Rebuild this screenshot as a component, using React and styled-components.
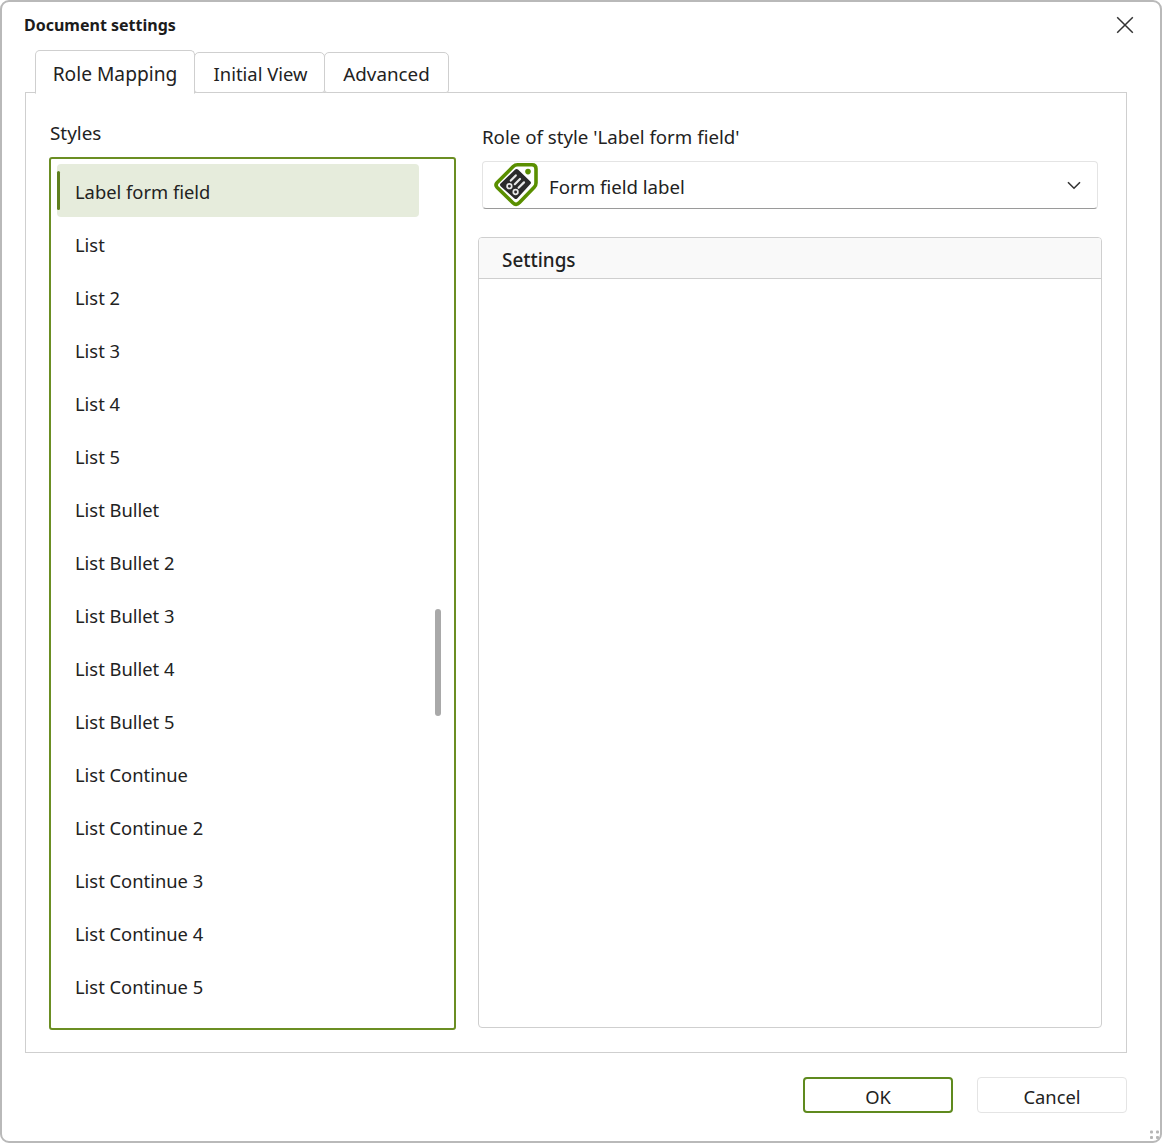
import React from 'react';
import styled, { createGlobalStyle } from 'styled-components';

const Global = createGlobalStyle`
  html, body { margin: 0; padding: 0; background: #fff; }
  body { font-family: "Noto Sans", "Open Sans", "Liberation Sans", sans-serif; color: #1f1f1f; }
  * { box-sizing: border-box; }
`;

const Window = styled.div`
  width: 1162px;
  height: 1143px;
  position: relative;
  background: #fff;
  border: 2px solid #b9b9b9;
  border-radius: 9px;
  padding: 0 33px 28px 23px;
  display: flex;
  flex-direction: column;
`;

const TitleBar = styled.div`
  height: 48px;
  display: flex;
  justify-content: space-between;
  align-items: flex-start;
`;

const Title = styled.h1`
  margin: 13px 0 0 -1px;
  font-size: 16px;
  line-height: 20px;
  font-weight: 700;
  font-family: "Noto Sans", sans-serif;
  color: #1c1c1c;
`;

const CloseButton = styled.button`
  border: 0;
  background: none;
  padding: 0;
  margin: 14px -7px 0 0;
  width: 18px;
  height: 18px;
  color: #333;
  display: block;
  svg { display: block; }
`;

const Tabs = styled.div`
  display: flex;
  align-items: flex-end;
  padding-left: 10px;
  height: 43px;
  position: relative;
  z-index: 1;
`;

const Tab = styled.div`
  height: ${p => (p.$active ? 44 : 41)}px;
  width: ${p => p.$w}px;
  border: 1px solid #cfcfcf;
  border-bottom: ${p => (p.$active ? '1px solid #fff' : '1px solid #cfcfcf')};
  border-radius: 5px 5px ${p => (p.$active ? '0 0' : '3px 3px')};
  background: #fff;
  font-size: ${p => p.$size}px;
  line-height: ${p => (p.$active ? 45 : 42)}px;
  padding-left: ${p => p.$nudge || 0}px;
  text-align: center;
  color: #222;
  margin-bottom: ${p => (p.$active ? -1 : 0)}px;
  margin-left: ${p => p.$overlap || 0}px;
`;

const TabPanel = styled.div`
  flex: 1;
  border: 1px solid #cfcfcf;
  margin-top: -1px;
  padding: 28px 24px 22px 23px;
  display: grid;
  grid-template-columns: 407px 624px;
  column-gap: 22px;
`;

const LeftColumn = styled.div`
  display: flex;
  flex-direction: column;
`;

const RightColumn = styled.div`
  display: flex;
  flex-direction: column;
`;

const FieldLabel = styled.div`
  font-size: ${p => p.$size}px;
  line-height: 24px;
  color: #222;
  padding-left: ${p => p.$indent || 0}px;
  margin-top: ${p => p.$top || 0}px;
`;

const ListBox = styled.div`
  position: relative;
  margin-top: 12px;
  flex: 1;
  height: 874px;
  border: 2px solid #6b8e23;
  border-radius: 3px;
  padding: 5px 6px;
  overflow: hidden;
`;

const Row = styled.div`
  position: relative;
  width: 362px;
  height: 53px;
  border-radius: 4px;
  padding-left: 18px;
  font-size: 18.35px;
  line-height: 56px;
  color: #222;
  background: ${p => (p.$selected ? '#e6ecdc' : 'transparent')};
`;

const Indicator = styled.span`
  position: absolute;
  left: 0;
  top: 7px;
  bottom: 7px;
  width: 3px;
  border-radius: 2px;
  background: #5f7f1e;
`;

const ScrollThumb = styled.div`
  position: absolute;
  left: 384px;
  top: 450px;
  width: 6px;
  height: 107px;
  border-radius: 3px;
  background: #a9a9a9;
`;

const Select = styled.div`
  margin: 12px 0 0 4px;
  width: 616px;
  height: 48px;
  border: 1px solid #e4e4e4;
  border-bottom: 1px solid #9a9a9a;
  border-radius: 4px;
  display: flex;
  align-items: center;
  padding: 0 15px 0 11px;
  font-size: 18.65px;
  color: #222;
`;

const SelectText = styled.span`
  flex: 1;
  margin-left: 11px;
  padding-top: 2px;
`;

const SettingsPanel = styled.div`
  margin-top: 28px;
  width: 624px;
  height: 791px;
  border: 1px solid #cfcfcf;
  border-radius: 4px;
  overflow: hidden;
`;

const SettingsHeader = styled.div`
  height: 41px;
  background: #f9f9f9;
  border-bottom: 1px solid #cfcfcf;
  padding-left: 23px;
  font-size: 18.9px;
  line-height: 44px;
  font-weight: 500;
  color: #222;
`;

const Footer = styled.div`
  display: flex;
  justify-content: flex-end;
  gap: 24px;
  margin-top: 24px;
`;

const Button = styled.button`
  width: 150px;
  height: 36px;
  background: #fff;
  border-radius: 4px;
  border: ${p => (p.$primary ? '2px solid #5f8a1e' : '1px solid #e4e4e4')};
  font: inherit;
  font-size: 18.35px;
  line-height: 1;
  color: #222;
  padding: 4px 0 0;
`;

const Grip = styled.svg`
  position: absolute;
  right: 1px;
  bottom: 1px;
`;

const TagIcon = () => (
  <svg width="44" height="44" viewBox="0 0 44 44" fill="none">
    <path
      d="M3.2 19.6 L19.2 3.6 Q21 1.8 23.5 1.8 L38 1.8 Q42 1.8 42 5.8 L42 20 Q42 22.5 40.2 24.3 L25.5 39.6 Q22.2 43 18.8 39.7 L3.2 24.6 Q0.8 22.1 3.2 19.6 Z"
      stroke="#5a8f00" strokeWidth="3.6" fill="#fff"
    />
    <path d="M6.6 20.6 L21.2 6.6 Q22.6 5.4 24 6.6 L36.4 18.4 Q37.6 19.8 36.4 21 L23.2 35.4 Q21.8 36.8 20.4 35.4 L6.6 23.2 Q5.4 21.8 6.6 20.6 Z" fill="#2b2b2b" />
    <circle cx="34" cy="8.6" r="2.8" fill="#5a8f00" />
    <path d="M16.8 17.6 L21.8 12.4 M20.8 21.2 L26 16 M24.6 24.8 L30 19.4" stroke="#e8e8e8" strokeWidth="2.2" strokeLinecap="round" />
    <circle cx="15.4" cy="23.2" r="2.3" stroke="#e8e8e8" strokeWidth="1.7" />
    <circle cx="21.6" cy="29" r="2.3" stroke="#e8e8e8" strokeWidth="1.7" />
  </svg>
);

const styles = [
  'Label form field', 'List', 'List 2', 'List 3', 'List 4', 'List 5',
  'List Bullet', 'List Bullet 2', 'List Bullet 3', 'List Bullet 4', 'List Bullet 5',
  'List Continue', 'List Continue 2', 'List Continue 3', 'List Continue 4', 'List Continue 5',
];

export default function App() {
  return (
    <>
      <Global />
      <Window>
        <TitleBar>
          <Title>Document settings</Title>
          <CloseButton aria-label="Close">
            <svg width="18" height="18" viewBox="0 0 18 18" stroke="currentColor" strokeWidth="1.5" fill="none">
              <path d="M1.2 1.2 L16.8 16.8 M16.8 1.2 L1.2 16.8" />
            </svg>
          </CloseButton>
        </TitleBar>
        <Tabs>
          <Tab $active $w={160} $size={19.2}>Role Mapping</Tab>
          <Tab $w={131} $size={18.4} $overlap={-1} $nudge={2}>Initial View</Tab>
          <Tab $w={125} $size={18.8} $overlap={-1}>Advanced</Tab>
        </Tabs>
        <TabPanel>
          <LeftColumn>
            <FieldLabel $size={18.9} $indent={1}>Styles</FieldLabel>
            <ListBox>
              {styles.map((s, i) => (
                <Row key={s} $selected={i === 0}>
                  {i === 0 && <Indicator />}
                  {s}
                </Row>
              ))}
              <ScrollThumb />
            </ListBox>
          </LeftColumn>
          <RightColumn>
            <FieldLabel $size={18.7} $indent={4} $top={4}>Role of style 'Label form field'</FieldLabel>
            <Select>
              <TagIcon />
              <SelectText>Form field label</SelectText>
              <svg width="16" height="10" viewBox="0 0 16 10" fill="none" stroke="#333" strokeWidth="1.6">
                <path d="M2 2.2 L8 8.2 L14 2.2" />
              </svg>
            </Select>
            <SettingsPanel>
              <SettingsHeader>Settings</SettingsHeader>
            </SettingsPanel>
          </RightColumn>
        </TabPanel>
        <Footer>
          <Button $primary>OK</Button>
          <Button>Cancel</Button>
        </Footer>
        <Grip width="12" height="12" viewBox="0 0 12 12" fill="#b5b5b5">
          <rect x="3" y="2.5" width="3" height="3" rx="1" />
          <rect x="9" y="2.5" width="3" height="3" rx="1" />
          <rect x="3" y="8" width="3" height="3" rx="1" />
          <rect x="9" y="8" width="3" height="3" rx="1" />
        </Grip>
      </Window>
    </>
  );
}
